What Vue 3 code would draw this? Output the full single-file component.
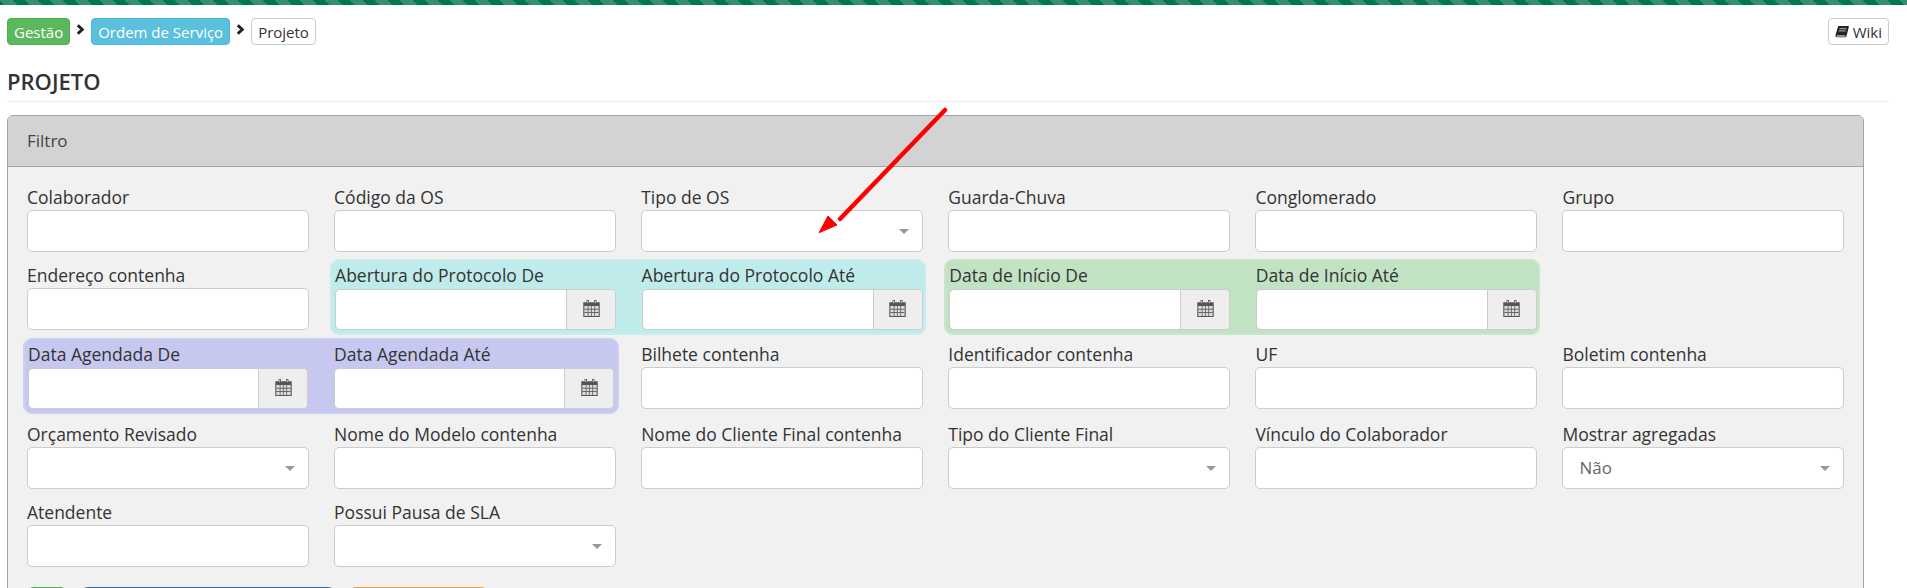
<template>
  <div class="page">
    <div class="top-bar"></div>

    <div class="crumbs">
      <div class="crumb-list">
        <span class="crumb green">Gestão</span>
        <svg class="chevron" viewBox="0 0 9 11"><path d="M1.800 1.200 6.200 5.500 1.800 9.800" /></svg>
        <span class="crumb blue">Ordem de Serviço</span>
        <svg class="chevron" viewBox="0 0 9 11"><path d="M1.800 1.200 6.200 5.500 1.800 9.800" /></svg>
        <span class="crumb plain">Projeto</span>
      </div>
      <span class="crumb plain wiki">
        <svg class="book" viewBox="0 0 14 14">
          <path d="M3.600 1h9.600c.5 0 .7.400.6.900L11.500 11c-.2.800-.7 1.300-1.600 1.300H1.900C.8 12.300.2 11.500.5 10.300L3 1.600C3.100 1.200 3.300 1 3.600 1Z" fill="#222" />
          <path d="M4.600 3h7l-.3 1.200h-7ZM4 5.200h7l-.3 1.200h-7Z" fill="#999" />
          <path d="M1.800 10.400h8.700c-.3.500-.3.900 0 1.100H1.900c-.4 0-.5-.9-.1-1.100Z" fill="#fff" />
        </svg>
        Wiki
      </span>
    </div>

    <h1 class="title">PROJETO</h1>

    <div class="panel">
      <div class="panel-header">Filtro</div>
      <div class="panel-body">
        <div class="filter-grid">
          <template v-for="(item, index) in filters" :key="index">
            <div v-if="item.group" class="date-group" :class="item.group">
              <div v-for="label in item.labels" :key="label" class="field">
                <label>{{ label }}</label>
                <div class="date-input">
                  <div class="date-text"></div>
                  <div class="date-addon">
                    <svg class="calendar" viewBox="1 1 15 15.500">
                      <path d="M1 3h15v13.500H1Z" fill="#555" />
                      <path d="M4 1h2.200v3.400H4ZM10.800 1H13v3.400h-2.200Z" fill="#555" />
                      <path d="M4.700 1.700h.8v2h-.8ZM11.500 1.700h.8v2h-.8Z" fill="#eee" />
                      <path d="M2 6.500h13v9H2Z" fill="#ddd" />
                      <path d="M5 6.500h.8v9H5ZM8 6.500h.8v9H8ZM11 6.500h.8v9H11ZM2 9h13v.8H2ZM2 12h13v.8H2Z" fill="#666" />
                    </svg>
                  </div>
                </div>
              </div>
            </div>
            <div v-else class="field">
              <label>{{ item.label }}</label>
              <div class="text-input" :class="{ select: item.select }">
                <span v-if="item.value" class="value">{{ item.value }}</span>
                <span v-if="item.select" class="caret"></span>
              </div>
            </div>
          </template>
        </div>

        <div class="actions">
          <button class="btn btn-green"></button>
          <button class="btn btn-blue"></button>
          <button class="btn btn-orange"></button>
        </div>
      </div>
    </div>

    <svg class="arrow" width="140" height="135" viewBox="0 0 140 135">
      <path d="M129 3 24 112" stroke="#f00" stroke-width="4.500" stroke-linecap="round" fill="none" />
      <path d="M3 125.700 12 109 21 118Z" fill="#f00" stroke="#f00" stroke-width="1" />
    </svg>
  </div>
</template>

<script setup>
// filtros na ordem em que aparecem na grade
const filters = [
  { label: 'Colaborador' },
  { label: 'Código da OS' },
  { label: 'Tipo de OS', select: true },
  { label: 'Guarda-Chuva' },
  { label: 'Conglomerado' },
  { label: 'Grupo' },
  { label: 'Endereço contenha' },
  { group: 'teal', labels: ['Abertura do Protocolo De', 'Abertura do Protocolo Até'] },
  { group: 'mint', labels: ['Data de Início De', 'Data de Início Até'] },
  { group: 'violet', labels: ['Data Agendada De', 'Data Agendada Até'] },
  { label: 'Bilhete contenha' },
  { label: 'Identificador contenha' },
  { label: 'UF' },
  { label: 'Boletim contenha' },
  { label: 'Orçamento Revisado', select: true },
  { label: 'Nome do Modelo contenha' },
  { label: 'Nome do Cliente Final contenha' },
  { label: 'Tipo do Cliente Final', select: true },
  { label: 'Vínculo do Colaborador' },
  { label: 'Mostrar agregadas', select: true, value: 'Não' },
  { label: 'Atendente' },
  { label: 'Possui Pausa de SLA', select: true }
]
</script>

<style>
html,
body {
  margin: 0;
  height: 588px;
  overflow: hidden;
  background: #fff;
}
</style>

<style scoped>
.page {
  position: relative;
  height: 588px;
  overflow: hidden;
  font-family: "Open Sans", "Noto Sans", sans-serif;
  color: #333;
}

.top-bar {
  height: 5px;
  background-image: linear-gradient(45deg, #36906c 25%, #00784f 25%, #00784f 50%, #36906c 50%, #36906c 75%, #00784f 75%);
  background-size: 25px 25px;
}

.crumbs {
  display: flex;
  justify-content: space-between;
  align-items: center;
  margin-top: 13px;
  padding: 0 18px 0 7px;
}

.crumb-list {
  display: flex;
  align-items: center;
}

.crumb {
  display: inline-flex;
  align-items: center;
  box-sizing: border-box;
  height: 27px;
  padding: 0 6px;
  border: 1px solid transparent;
  border-radius: 4px;
  font-size: 15px;
}

.green {
  background: #5cb85c;
  border-color: #4cae4c;
  color: #fff;
}

.blue {
  background: #5bc0de;
  border-color: #46b8da;
  color: #fff;
}

.plain {
  background: #fff;
  border-color: #ccc;
  color: #333;
}

.wiki {
  gap: 4px;
}

.book {
  width: 14px;
  height: 14px;
}

.chevron {
  width: 9px;
  height: 11px;
  margin: -5px 6px 0 6px;
  fill: none;
  stroke: #222;
  stroke-width: 3;
}

.title {
  margin: 0 18px 0 7px;
  padding: 19px 0 3px;
  border-bottom: 1px solid #eee;
  font-size: 22px;
  line-height: 34px;
  font-weight: 600;
  color: #333;
}

.panel {
  width: 1857px;
  margin: 13px 0 0 7px;
  box-sizing: border-box;
  border: 1px solid #a3a3a3;
  border-radius: 6px;
  background: #f1f1f1;
}

.panel-header {
  height: 50px;
  line-height: 50px;
  padding-left: 19px;
  border-bottom: 1px solid #a3a3a3;
  border-radius: 5px 5px 0 0;
  background: #d3d3d3;
  font-size: 17px;
  color: #444;
}

.panel-body {
  padding: 21px 0 0 19px;
}

.filter-grid {
  display: grid;
  grid-template-columns: repeat(6, 282px);
  grid-template-rows: 78px 79px 80px 78px 64px;
  column-gap: 25.1px;
}

.field label {
  display: block;
  height: 22px;
  line-height: 19px;
  font-size: 17.5px;
  font-weight: 500;
  color: #333;
  white-space: nowrap;
}

.date-group .field label {
  height: 23px;
}

.text-input {
  position: relative;
  box-sizing: border-box;
  height: 42px;
  padding-left: 16px;
  border: 1px solid #ccc;
  border-radius: 5px;
  background: #fff;
  line-height: 40px;
}

.value {
  font-size: 17px;
  color: #666;
}

.caret {
  position: absolute;
  top: 18px;
  right: 13px;
  border-style: solid;
  border-width: 5px 5px 0 5px;
  border-color: #999 transparent transparent transparent;
}

.date-group {
  grid-column: span 2;
  display: grid;
  grid-template-columns: 281px 281px;
  column-gap: 25.5px;
  box-sizing: border-box;
  width: 596px;
  height: 76px;
  margin: -7px 0 0 -4px;
  padding: 5px 0 0 3px;
  border: 2px solid;
  border-radius: 9px;
}

.teal {
  background: #bfebea;
  border-color: #c8eded;
}

.mint {
  background: #c1e2c3;
  border-color: #c9e5cb;
}

.violet {
  grid-template-columns: 280px 280px;
  column-gap: 26px;
  background: #c6c8ef;
  border-color: #cdcff1;
}

.date-input {
  display: flex;
  box-sizing: border-box;
  height: 41px;
  border: 1px solid #ccc;
  border-radius: 5px;
  background: #fff;
  overflow: hidden;
}

.date-text {
  flex: 1;
}

.date-addon {
  display: flex;
  justify-content: center;
  align-items: center;
  width: 48px;
  border-left: 1px solid #ccc;
  background: #eee;
}

.calendar {
  width: 17px;
  height: 17px;
  margin-top: -2px;
}

.actions {
  display: flex;
  gap: 18px;
  margin-top: 20px;
  padding-left: 2px;
}

.btn {
  height: 34px;
  padding: 0;
  border: 1px solid;
  border-radius: 4px;
}

.btn-green {
  width: 36px;
  background: #5cb85c;
  border-color: #4cae4c;
}

.btn-blue {
  width: 250px;
  background: #337ab7;
  border-color: #2e6da4;
}

.btn-orange {
  width: 135px;
  background: #f0ad4e;
  border-color: #eea236;
}

/* seta vermelha desenhada por cima da tela */
.arrow {
  position: absolute;
  top: 107px;
  left: 816px;
}
</style>
